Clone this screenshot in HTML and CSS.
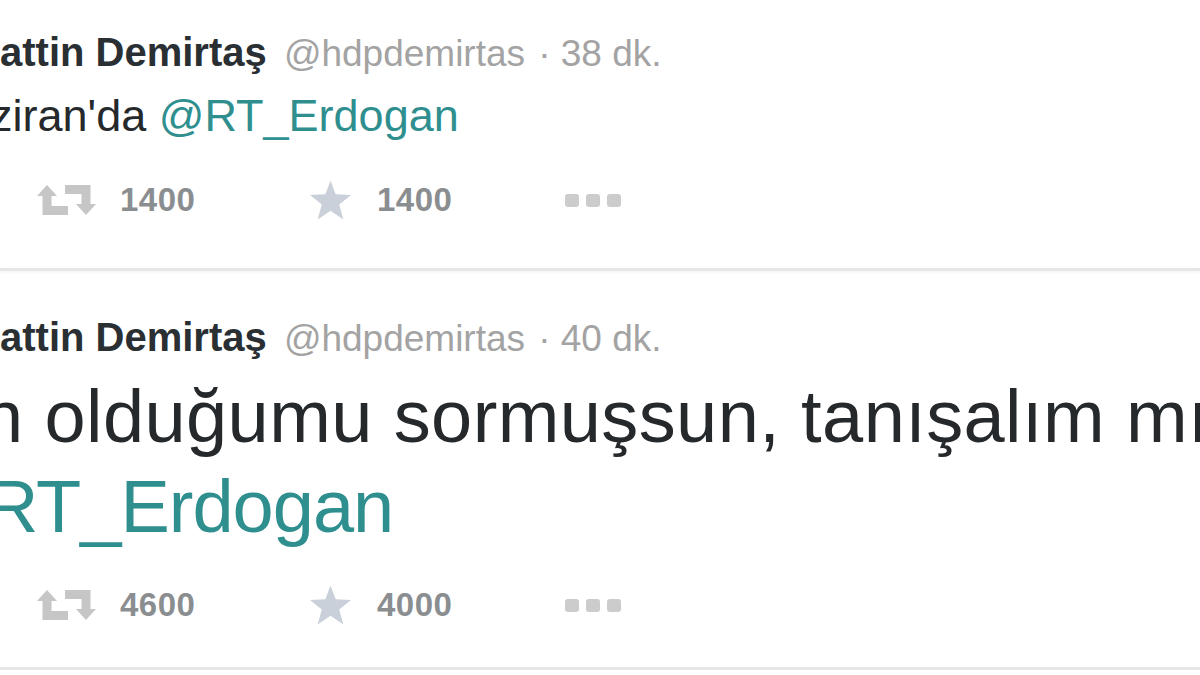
FILE: index.html
```html
<!DOCTYPE html>
<html lang="tr">
<head>
    <meta charset="UTF-8">
    <meta name="viewport" content="width=device-width, initial-scale=1.0">
    <title>hdpdemirtas</title>
    <link rel="stylesheet" href="styles.css">
</head>
<body>
    <div class="timeline">
        <div class="tweet">
            <div class="tweet-header">
                <span class="fullname">attin Demirtaş</span>
                <span class="username">@hdpdemirtas</span>
                <span class="time">· 38 dk.</span>
            </div>
            <p class="tweet-text small"><span class="cut-z">ziran'da</span> <a href="#">@RT_Erdogan</a></p>
            <div class="actions">
                <div class="action">
                    <svg class="icon-rt" viewBox="0 0 57 30"><path d="M9 0 L19 11 L13.5 11 L13.5 21 L30 21 L30 30 L4.5 30 L4.5 11 L-1 11 Z"/><path d="M48 30 L58 19 L52.5 19 L52.5 0 L27 0 L27 9 L43.5 9 L43.5 19 L38 19 Z"/></svg>
                    <span class="count">1400</span>
                </div>
                <div class="action">
                    <svg class="icon-fav" viewBox="0 0 40 38"><polygon points="20,0 25,13.5 40,14 28.5,23.5 32.5,38 20,29.5 7.5,38 11.5,23.5 0,14 15,13.5"/></svg>
                    <span class="count">1400</span>
                </div>
                <div class="action more">
                    <span class="dot"></span><span class="dot"></span><span class="dot"></span>
                </div>
            </div>
        </div>

        <div class="tweet">
            <div class="tweet-header">
                <span class="fullname">attin Demirtaş</span>
                <span class="username">@hdpdemirtas</span>
                <span class="time">· 40 dk.</span>
            </div>
            <p class="tweet-text large">
                <span class="line cut-n">n olduğumu sormuşsun, tanışalım mı</span>
                <a class="line cut-r" href="#">RT_Erdogan</a>
            </p>
            <div class="actions">
                <div class="action">
                    <svg class="icon-rt" viewBox="0 0 57 30"><path d="M9 0 L19 11 L13.5 11 L13.5 21 L30 21 L30 30 L4.5 30 L4.5 11 L-1 11 Z"/><path d="M48 30 L58 19 L52.5 19 L52.5 0 L27 0 L27 9 L43.5 9 L43.5 19 L38 19 Z"/></svg>
                    <span class="count">4600</span>
                </div>
                <div class="action">
                    <svg class="icon-fav" viewBox="0 0 40 38"><polygon points="20,0 25,13.5 40,14 28.5,23.5 32.5,38 20,29.5 7.5,38 11.5,23.5 0,14 15,13.5"/></svg>
                    <span class="count">4000</span>
                </div>
                <div class="action more">
                    <span class="dot"></span><span class="dot"></span><span class="dot"></span>
                </div>
            </div>
        </div>
    </div>
</body>
</html>
```

FILE: styles.css
```css
body {
    margin: 0;
    background: #fff;
    font-family: 'Liberation Sans', Arial, sans-serif;
    overflow: hidden;
}
.timeline {
    width: 1200px;
    overflow: hidden;
}
.tweet {
    border-bottom: 3px solid #e6e6e6;
    box-shadow: 0 2px 3px rgba(0, 0, 0, 0.04);
}
.tweet:first-child {
    padding: 29px 0 48px;
}
.tweet:last-child {
    padding: 43px 0 42px;
}

/* header: name, handle, time */
.tweet-header {
    font-size: 40px;
    line-height: 46px;
    white-space: nowrap;
}
.fullname {
    font-weight: bold;
    color: #292f33;
}
.username {
    font-size: 37px;
    color: #a3a3a3;
    margin-left: 6px;
}
.time {
    font-size: 37px;
    color: #a3a3a3;
    margin-left: 2px;
}

/* tweet body */
.tweet-text {
    margin: 0;
    color: #25292c;
    white-space: nowrap;
}
.tweet-text a {
    color: #2f8f8f;
    text-decoration: none;
}
.tweet-text.small {
    font-size: 45px;
    line-height: 56px;
    margin-top: 11px;
}
.tweet-text.large {
    font-size: 74px;
    line-height: 90px;
    margin-top: 10px;
}
.tweet-text .line {
    display: block;
}
.cut-z {
    margin-left: -10px;
}
.cut-n {
    margin-left: -18px;
    letter-spacing: 0.4px;
}
.cut-r {
    margin-left: -15px;
    letter-spacing: -1px;
}

/* retweet / favorite / more */
.actions {
    display: grid;
    grid-template-columns: 272px 255px auto;
    align-items: center;
    height: 40px;
    padding-left: 38px;
}
.tweet:first-child .actions {
    margin-top: 36px;
}
.tweet:last-child .actions {
    margin-top: 33px;
}
.action {
    display: flex;
    align-items: center;
}
.icon-rt {
    width: 57px;
    height: 30px;
    fill: #c6c6c6;
    overflow: visible;
}
.icon-fav {
    width: 41px;
    height: 40px;
    fill: #c9d0d9;
}
.count {
    font-size: 33px;
    font-weight: bold;
    color: #8b8e91;
    margin-left: 25px;
    letter-spacing: 0.5px;
}
.tweet .action:nth-child(2) .count {
    margin-left: 26px;
}
.more {
    gap: 7px;
}
.dot {
    width: 14px;
    height: 13px;
    border-radius: 3px;
    background: #cccccc;
}
```
